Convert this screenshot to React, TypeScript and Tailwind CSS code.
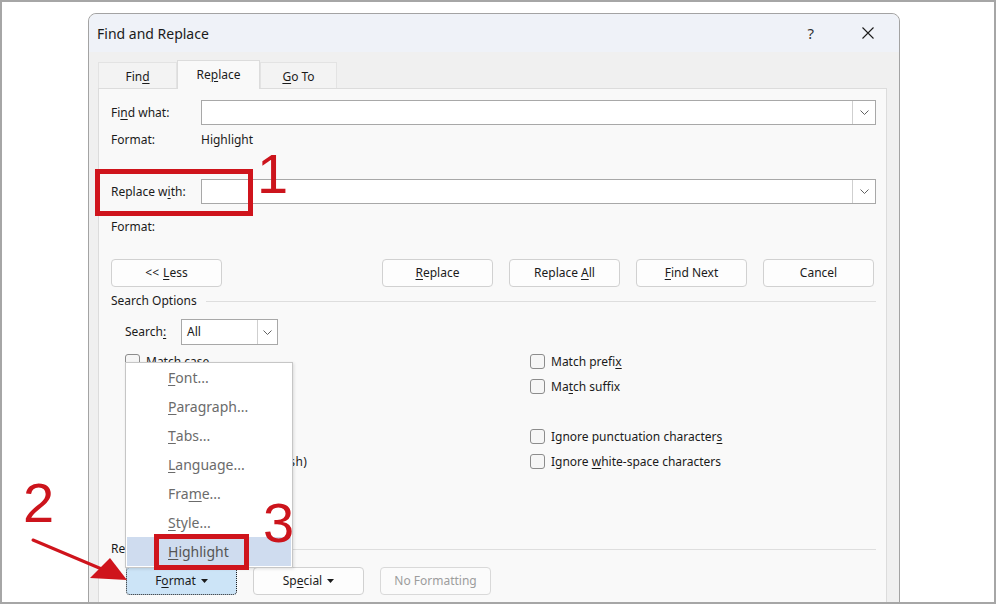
import type { ReactNode } from "react";

const ui = "font-['Segoe_UI','Noto_Sans',sans-serif]";

function U({ children }: { children: ReactNode }) {
  return <span className="underline decoration-1 underline-offset-[2px]">{children}</span>;
}

function Chevron() {
  return (
    <svg width="9" height="5" viewBox="0 0 9 5" className="shrink-0">
      <polyline points="0.5,0.5 4.5,4.5 8.5,0.5" fill="none" stroke="#616161" strokeWidth="1" />
    </svg>
  );
}

function Caret() {
  return (
    <svg width="7" height="4" viewBox="0 0 7 4" className="ml-[5px] shrink-0">
      <polygon points="0,0 7,0 3.5,4" fill="#1b1b1b" />
    </svg>
  );
}

function Btn({ children, className = "" }: { children: ReactNode; className?: string }) {
  return (
    <div
      className={`flex h-[28px] w-[111px] items-center justify-center rounded-[4px] border text-[12px] ${className}`}
    >
      {children}
    </div>
  );
}

function ComboInput() {
  return (
    <div className="flex h-[25px] flex-1 border border-[#a8a8a8] bg-white">
      <div className="flex-1" />
      <div className="flex w-[23px] items-center justify-center border-l border-[#cfcfcf] bg-white">
        <Chevron />
      </div>
    </div>
  );
}

// a row with no label still keeps its box (the menu covers those rows)
function Check({ label, box = true }: { label?: ReactNode; box?: boolean }) {
  return (
    <div className="flex h-[25px] items-center gap-[6px]">
      {box && <div className="h-[15px] w-[15px] rounded-[3px] border border-[#8c8c8c] bg-[#f6f6f6]" />}
      {label && <span>{label}</span>}
    </div>
  );
}

const menuItems: ReactNode[] = [
  <><U>F</U>ont...</>,
  <><U>P</U>aragraph...</>,
  <><U>T</U>abs...</>,
  <><U>L</U>anguage...</>,
  <>Fra<U>m</U>e...</>,
  <><U>S</U>tyle...</>,
];

export default function App() {
  return (
    <div
      className={`relative h-[604px] w-[996px] overflow-hidden border-2 border-[#a6a6a6] bg-white text-[12px] text-[#1b1b1b] ${ui}`}
    >
      {/* dialog window */}
      <div className="ml-[86px] mt-[11px] h-[640px] w-[812px] rounded-t-[8px] border border-[#a3a3a3] bg-[#f0f0f0]">
        <div className="flex h-[38px] items-center rounded-t-[8px] bg-[#eff2f8] pl-[8px] pr-[25px]">
          <span className="text-[14px]">Find and Replace</span>
          <span className="ml-auto mr-[48px] text-[15px] text-[#333]">?</span>
          <svg width="12" height="12" viewBox="0 0 12 12">
            <path d="M0.5 0.5 L11.5 11.5 M11.5 0.5 L0.5 11.5" stroke="#1b1b1b" strokeWidth="1.1" />
          </svg>
        </div>

        {/* tabs */}
        <div className="mt-[8px] flex h-[28px] items-end pl-[9px]">
          <div className="flex h-[26px] w-[79px] items-center justify-center border border-b-0 border-[#e3e3e3] bg-[#f3f3f3] pt-[3px] text-[12px]">
            Fin<U>d</U>
          </div>
          <div className="relative z-10 -mb-px flex h-[29px] w-[83px] items-center justify-center border border-b-0 border-[#dcdcdc] bg-[#f9f9f9] text-[12px]">
            Re<U>p</U>lace
          </div>
          <div className="flex h-[26px] w-[77px] items-center justify-center border border-b-0 border-[#e3e3e3] bg-[#f3f3f3] pt-[3px] text-[12px]">
            <U>G</U>o To
          </div>
        </div>

        {/* tab panel */}
        <div className="ml-[9px] h-[540px] w-[789px] border border-[#dcdcdc] bg-[#f9f9f9] pl-[12px] pr-[10px] pt-[11px]">
          <div className="flex h-[25px] items-center">
            <span className="w-[90px]">
              Fi<U>n</U>d what:
            </span>
            <ComboInput />
          </div>
          <div className="mt-[7px] flex h-[16px] items-center">
            <span className="w-[90px]">Format:</span>
            <span>Highlight</span>
          </div>

          <div className="mt-[31px] flex h-[25px] items-center">
            <span className="w-[90px]">
              Replace w<U>i</U>th:
            </span>
            <ComboInput />
          </div>
          <div className="mt-[15px] flex h-[16px] items-center">
            <span className="w-[90px]">Format:</span>
          </div>

          <div className="mt-[24px] flex items-center">
            <Btn className="border-[#d1d1d1] bg-[#fdfdfd]">
              &lt;&lt; <span className="ml-[4px]"><U>L</U>ess</span>
            </Btn>
            <div className="ml-auto mr-[2px] flex gap-[16px]">
              <Btn className="border-[#d1d1d1] bg-[#fdfdfd]">
                <U>R</U>eplace
              </Btn>
              <Btn className="border-[#d1d1d1] bg-[#fdfdfd]">
                Replace <span className="ml-[3px]"><U>A</U>ll</span>
              </Btn>
              <Btn className="border-[#d1d1d1] bg-[#fdfdfd]">
                <U>F</U>ind Next
              </Btn>
              <Btn className="border-[#d1d1d1] bg-[#fdfdfd]">Cancel</Btn>
            </div>
          </div>

          <div className="mt-[6px] flex h-[16px] items-center">
            <span>Search Options</span>
            <div className="ml-[9px] h-px flex-1 bg-[#dedede]" />
          </div>

          <div className="mt-[10px] flex h-[26px] items-center pl-[14px]">
            <span className="w-[56px]">
              Search<U>:</U>
            </span>
            <div className="flex h-[26px] w-[97px] border border-[#a8a8a8] bg-white">
              <span className="flex-1 pl-[5px] leading-[24px]">All</span>
              <div className="flex w-[20px] items-center justify-center border-l border-[#cfcfcf]">
                <Chevron />
              </div>
            </div>
          </div>

          <div className="mt-[4px] flex">
            <div className="w-[419px] pl-[14px]">
              <Check label={<>Matc<U>h</U> case</>} />
              <Check />
              <Check />
              <Check />
              <Check label={<>Find all <U>w</U>ord forms (Engl<span className="tracking-[0.4px]">ish)</span></>} />
            </div>
            <div className="flex-1">
              <Check label={<>Match prefi<U>x</U></>} />
              <Check label={<>Ma<U>t</U>ch suffix</>} />
              <Check box={false} />
              <Check label={<>Ignore punctuation character<U>s</U></>} />
              <Check label={<>Ignore <U>w</U>hite-space characters</>} />
            </div>
          </div>

          <div className="mt-[67px] flex h-[16px] items-center">
            <span>Replace</span>
            <div className="ml-[9px] h-px flex-1 bg-[#dedede]" />
          </div>

          <div className="mt-[10px] flex gap-[16px] pl-[15px]">
            <Btn className="border-dotted border-[#1f1f1f] bg-[#cce4f7]">
              F<U>o</U>rmat
              <Caret />
            </Btn>
            <Btn className="w-[110px] border-[#d1d1d1] bg-[#fdfdfd]">
              Sp<U>e</U>cial
              <Caret />
            </Btn>
            <Btn className="border-[#d9d9d9] bg-[#fbfbfb] text-[#9d9d9d]">No Formatting</Btn>
          </div>
        </div>
      </div>

      {/* Format dropdown menu */}
      <div className="absolute left-[123px] top-[360px] h-[206px] w-[168px] border border-[#c6c6c6] bg-white text-[14px] text-[#6b6b6b] shadow-[1px_1px_3px_rgba(0,0,0,0.12)]">
        {menuItems.map((item, i) => (
          <div key={i} className="flex h-[29px] items-center pl-[42px]">
            {item}
          </div>
        ))}
        <div className="mx-px flex h-[29px] items-center bg-[#cfdcef] pl-[41px] text-[#555]">
          <U>H</U>ighlight
        </div>
      </div>

      {/* red callouts */}
      <div className="absolute left-[93px] top-[167px] h-[47px] w-[158px] border-[5px] border-[#cf141c]" />
      <div className="absolute left-[152px] top-[532px] h-[36px] w-[95px] border-[5px] border-[#cf141c]" />
      <svg className="pointer-events-none absolute left-[-2px] top-[-2px]" width="996" height="604">
        <line x1="33" y1="540" x2="104" y2="570" stroke="#cf141c" strokeWidth="3" strokeLinecap="round" />
        <polygon points="127,580 90,578 110,558" fill="#cf141c" />
      </svg>
      <span className="absolute left-[255px] top-[144px] font-['Liberation_Sans',Arial,sans-serif] text-[56px] leading-none text-[#cc141c]">
        1
      </span>
      <span className="absolute left-[21px] top-[473px] font-['Liberation_Sans',Arial,sans-serif] text-[56px] leading-none text-[#cc141c]">
        2
      </span>
      <span className="absolute left-[261px] top-[493px] font-['Liberation_Sans',Arial,sans-serif] text-[56px] leading-none text-[#cc141c]">
        3
      </span>
    </div>
  );
}
